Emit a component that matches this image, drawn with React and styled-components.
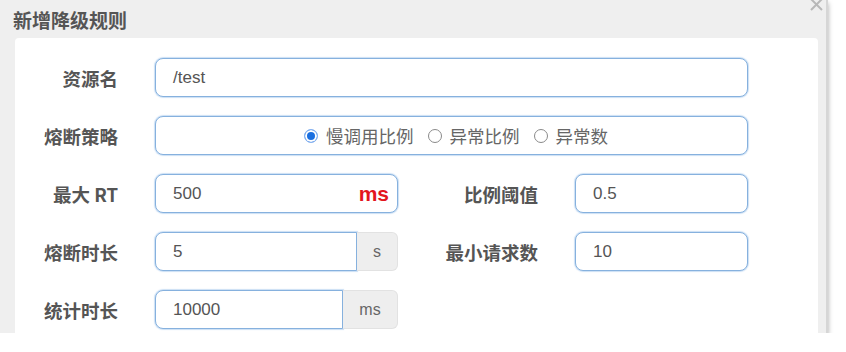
import styled, { createGlobalStyle } from 'styled-components'

const GlobalStyle = createGlobalStyle`
  body {
    margin: 0;
    background: #fff;
    font-family: 'Liberation Sans', 'Noto Sans CJK SC', sans-serif;
  }
`

const Dialog = styled.div`
  position: relative;
  width: 826px;
  height: 333px;
  background: #efefef;
  border-right: 2px solid #d6d6d6;
  box-shadow: 0 3px 5px rgba(0, 0, 0, 0.35);
  overflow: hidden;
`

const Header = styled.div`
  height: 38px;
  display: flex;
  align-items: center;
  padding-left: 13px;
  font-family: 'Noto Sans CJK SC', sans-serif;
  font-size: 19px;
  font-weight: 700;
  color: #555;
`

const Close = styled.svg`
  position: absolute;
  top: -3px;
  left: 809px;
  width: 15px;
  height: 15px;
`

const Card = styled.div`
  margin-left: 15px;
  width: 803px;
  height: 320px;
  background: #fff;
  border-radius: 4px;
  padding-top: 20px;
  box-sizing: border-box;
  display: flex;
  flex-direction: column;
  gap: 19px;
`

const Row = styled.div`
  display: flex;
  align-items: center;
  height: 39px;
  flex-shrink: 0;
`

const Label = styled.label`
  width: ${(p) => p.$w}px;
  margin-right: 37px;
  text-align: right;
  font-family: 'Noto Sans CJK SC', sans-serif;
  font-size: 18.5px;
  font-weight: 700;
  color: #555;
  white-space: nowrap;
`

const Box = styled.div`
  width: ${(p) => p.$w}px;
  height: 39px;
  box-sizing: border-box;
  display: flex;
  align-items: center;
  justify-content: ${(p) => (p.$center ? 'center' : 'flex-start')};
  padding: 0 8px 0 17px;
  border: 1px solid #86b1de;
  box-shadow: 0 0 1px 1px rgba(140, 185, 230, 0.45);
  border-radius: ${(p) => (p.$joined ? '8px 0 0 8px' : '8px')};
  font-size: 17px;
  color: #555;
  background: #fff;
`

const Value = styled.span`
  flex: 1;
`

const RedUnit = styled.span`
  font-family: 'Liberation Sans', sans-serif;
  font-weight: 700;
  font-size: 21px;
  color: #e3151e;
`

const Group = styled.div`
  display: flex;
  width: ${(p) => p.$w}px;
`

const Addon = styled.div`
  width: ${(p) => p.$w}px;
  height: 39px;
  box-sizing: border-box;
  display: flex;
  align-items: center;
  justify-content: center;
  background: #eee;
  border: 1px solid #e2e2e2;
  border-left: none;
  border-radius: 0 6px 6px 0;
  font-size: 16px;
  color: #666;
`

const Option = styled.span`
  display: flex;
  align-items: center;
  margin-right: 14px;
  font-family: 'Noto Sans CJK SC', sans-serif;
  font-size: 17.5px;
  color: #666;
  &:last-child {
    margin-right: 0;
  }
`

const Radio = styled.span`
  width: 14px;
  height: 14px;
  box-sizing: border-box;
  border-radius: 50%;
  margin-right: 8px;
  border: ${(p) => (p.$on ? '1px solid #8ab4f0' : '1px solid #8a8a8a')};
  background: ${(p) => (p.$on ? '#1a6fe0' : '#fff')};
  box-shadow: ${(p) => (p.$on ? 'inset 0 0 0 2px #fff' : 'none')};
`

const Field = ({ w, joined, children }) => (
  <Box $w={w} $joined={joined}>
    {children}
  </Box>
)

const App = () => {
  return (
    <>
      <GlobalStyle />
      <Dialog>
        <Header>新增降级规则</Header>
        <Close viewBox='0 0 15 15'>
          <path d='M2 2 L13 13 M13 2 L2 13' stroke='#b8b8b8' strokeWidth='2' />
        </Close>
        <Card>
          {/* resource */}
          <Row>
            <Label $w={103}>资源名</Label>
            <Field w={593}>
              <Value>/test</Value>
            </Field>
          </Row>
          {/* strategy */}
          <Row>
            <Label $w={103}>熔断策略</Label>
            <Box $w={593} $center>
              <Option>
                <Radio $on />
                慢调用比例
              </Option>
              <Option>
                <Radio />
                异常比例
              </Option>
              <Option>
                <Radio />
                异常数
              </Option>
            </Box>
          </Row>
          {/* max rt / ratio */}
          <Row>
            <Label $w={103}>最大 RT</Label>
            <Field w={243}>
              <Value>500</Value>
              <RedUnit>ms</RedUnit>
            </Field>
            <Label $w={140}>比例阈值</Label>
            <Field w={173}>
              <Value>0.5</Value>
            </Field>
          </Row>
          {/* duration / min requests */}
          <Row>
            <Label $w={103}>熔断时长</Label>
            <Group $w={243}>
              <Field w={202} joined>
                <Value>5</Value>
              </Field>
              <Addon $w={41}>s</Addon>
            </Group>
            <Label $w={140}>最小请求数</Label>
            <Field w={173}>
              <Value>10</Value>
            </Field>
          </Row>
          {/* stat interval */}
          <Row>
            <Label $w={103}>统计时长</Label>
            <Group $w={243}>
              <Field w={188} joined>
                <Value>10000</Value>
              </Field>
              <Addon $w={55}>ms</Addon>
            </Group>
          </Row>
        </Card>
      </Dialog>
    </>
  )
}

export default App
